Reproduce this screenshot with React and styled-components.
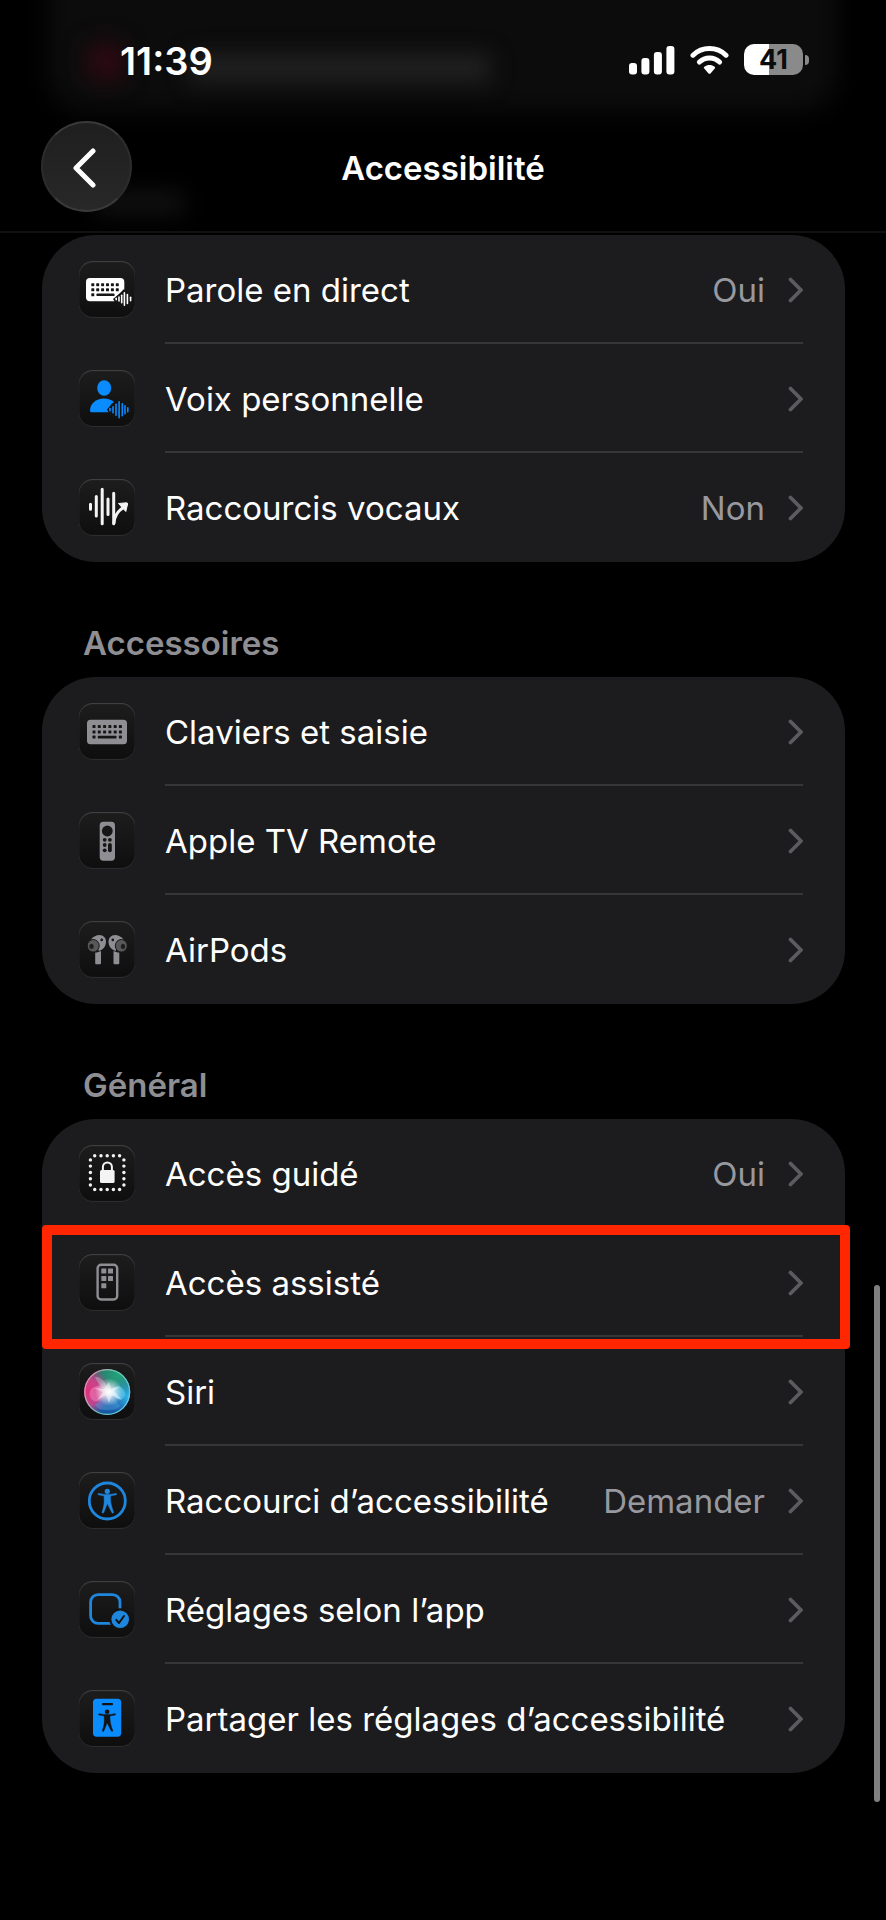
import React from 'react';
import styled, { createGlobalStyle } from 'styled-components';

const GlobalStyle = createGlobalStyle`
  * {
    box-sizing: border-box;
  }

  body {
    margin: 0;
    background: #000;
    color: #fff;
    font-family: Inter, "Liberation Sans", sans-serif;
  }
`;

const Page = styled.div`
  position: relative;
  min-height: 100vh;
  overflow: hidden;
  background: #000;
`;

/* ---------- header ---------- */

const Header = styled.header`
  position: relative;
  padding-bottom: 19px;
  border-bottom: 2px solid #111112;
`;

/* What has scrolled under the header shows through as a faint haze */
const Haze = styled.div`
  position: absolute;
  inset: 0;
  overflow: hidden;
`;

const HazeCard = styled.div`
  position: absolute;
  top: -40px;
  left: 48px;
  right: 48px;
  height: 152px;
  border-radius: 40px;
  background: #0c0c0c;
  filter: blur(12px);
`;

const HazeIcon = styled.div`
  position: absolute;
  top: 44px;
  left: 88px;
  width: 36px;
  height: 36px;
  border-radius: 12px;
  background: #320913;
  filter: blur(12px);
`;

const HazeText = styled.div`
  position: absolute;
  top: ${ props => props.$low ? "192px" : "54px" };
  left: ${ props => props.$low ? "96px" : "190px" };
  width: ${ props => props.$low ? "88px" : "300px" };
  height: ${ props => props.$low ? "22px" : "28px" };
  background: ${ props => props.$low ? "#121212" : "#212121" };
  filter: blur(11px);
`;

const StatusBar = styled.div`
  position: relative;
  display: flex;
  align-items: center;
  justify-content: space-between;
  height: 121px;
  padding: 0 77px 2px 120px;
`;

const Time = styled.time`
  padding-top: 2px;
  font-size: 38px;
  line-height: 44px;
  font-weight: 600;
`;

const StatusIcons = styled.div`
  display: flex;
  align-items: center;
  gap: 15px;
`;

const Battery = styled.div`
  display: flex;
  align-items: center;
  gap: 2px;

  &:after {
    content: "";
    width: 4px;
    height: 10px;
    border-radius: 0 5px 5px 0;
    background: #8a8a8a;
  }
`;

const BatteryLevel = styled.div`
  width: 59px;
  height: 31px;
  border-radius: 10px;
  background: linear-gradient(to right, #fff 42%, #8a8a8a 42%);
  color: #0c0c0c;
  font-size: 27px;
  line-height: 31px;
  font-weight: 700;
  text-align: center;
`;

const NavBar = styled.nav`
  position: relative;
  display: grid;
  grid-template-columns: 91px 1fr 91px;
  align-items: center;
  padding: 0 41px;
`;

const BackButton = styled.button`
  display: flex;
  align-items: center;
  justify-content: center;
  width: 91px;
  height: 91px;
  padding: 0;
  border: 2px solid #3a3a3a;
  border-left-color: #2c2c2c;
  border-right-color: #2c2c2c;
  border-radius: 50%;
  background: linear-gradient(#1f1f1f, #282828);
  color: #fff;
`;

const Title = styled.h1`
  margin: 0;
  padding-top: 2px;
  font-size: 33px;
  line-height: 42px;
  font-weight: 600;
  text-align: center;
`;

/* ---------- settings list ---------- */

const Content = styled.main`
  padding: 2px 41px 148px 42px;
`;

const SectionTitle = styled.h2`
  margin: 0;
  padding: 60px 41px 13px;
  color: #8e8e93;
  font-size: 33px;
  line-height: 42px;
  font-weight: 600;
`;

const Card = styled.ul`
  margin: 0;
  padding: 0;
  list-style: none;
  border-radius: 54px;
  background: #1c1c1e;
`;

const Item = styled.li`
  position: relative;
`;

const RowLink = styled.a`
  display: flex;
  align-items: center;
  gap: 30px;
  padding: 0 42px 0 37px;
  color: inherit;
  text-decoration: none;
`;

const Tile = styled.span`
  flex: none;
  width: 56px;
  height: 57px;
  border-radius: 14px;
  background: linear-gradient(#1d1d1d, #0e0e0e);
  box-shadow: inset 0 1px 1px #454545, inset 0 -1px 1px #303030;

  svg {
    display: block;
  }
`;

const RowBody = styled.span`
  display: flex;
  flex: 1;
  align-items: center;
  min-width: 0;
  height: 109px;
  padding-top: 2px;
  border-bottom: 2px solid transparent;

  ${ Item }:not(:last-child) & {
    border-bottom-color: #363638;
  }
`;

const Label = styled.span`
  flex: 1;
  font-size: 33px;
  line-height: 42px;
`;

const Value = styled.span`
  margin-right: 22px;
  color: #98989f;
  font-size: 33px;
  line-height: 42px;
`;

/* Marker drawn over the row that has to be tapped */
const Highlight = styled.div`
  position: absolute;
  top: -3px;
  left: 0;
  right: -5px;
  bottom: -12px;
  border: 10px solid #ff2600;
  border-radius: 4px;
  pointer-events: none;
  z-index: 1;
`;

const ScrollThumb = styled.div`
  position: absolute;
  top: 66.9%;
  right: 6px;
  bottom: 6.2%;
  width: 6px;
  border-radius: 3px;
  background: #808080;
`;

/* ---------- icons ---------- */

const Glyph = ({ children }) => (
  <svg width="56" height="57" viewBox="-1 0 56 57" fill="none" aria-hidden="true">
    {children}
  </svg>
);

const Bars = ({ bars, cy, color }) => bars.map(([x, h]) => (
  <line key={x} x1={x} x2={x} y1={cy - h / 2} y2={cy + h / 2} stroke={color} strokeWidth="1.6" strokeLinecap="round" />
));

const Dots = ({ xs, ys, r, fill }) => ys.map(y => xs.map(x => (
  <circle key={`${x}-${y}`} cx={x} cy={y} r={r} fill={fill} />
)));

const Keys = ({ xs, ys, fill }) => ys.map(y => xs.map(x => (
  <rect key={`${x}-${y}`} x={x - 1.5} y={y - 1.5} width="3" height="3" rx="0.6" fill={fill} />
)));

const LiveSpeechIcon = () => (
  <Glyph>
    <rect x="6" y="17" width="38.3" height="23.3" rx="4" fill="#fff" />
    <Keys xs={[12.8, 17.7, 22.6, 27.5, 32.4, 37.3]} ys={[23.7, 28.8]} fill="#161616" />
    <Keys xs={[12.8]} ys={[33.8]} fill="#161616" />
    <rect x="16.5" y="32.6" width="18" height="2.4" rx="0.6" fill="#161616" />
    <path d="M33 38l7-6 4-4 8 8v10H38z" fill="#131313" />
    <Bars cy={38} color="#fff" bars={[[36.2, 1.4], [39, 4], [41.7, 7.5], [44.4, 12.5], [47.4, 9], [50.6, 3.4]]} />
  </Glyph>
);

const PersonalVoiceIcon = () => (
  <Glyph>
    <ellipse cx="24.2" cy="18" rx="7" ry="7.7" fill="#0a8cff" />
    <path d="M10 40.4C10 34 16 28.6 24 28.6S38 34 38 40.4c0 1.2-.8 1.9-2 1.9H12c-1.200 0-2-.7-2-1.900z" fill="#0a8cff" />
    <path d="M27 39.5l5-6 6-4.500 4 3v15H31z" fill="#131313" />
    <Bars cy={39.7} color="#0a8cff" bars={[[30, 2.2], [33, 6], [36, 11], [39.1, 16], [42.3, 12], [45, 8], [47.8, 4]]} />
  </Glyph>
);

const VocalShortcutsIcon = () => (
  <Glyph>
    <g stroke="#f4f4f4" strokeWidth="3" strokeLinecap="round">
      <path d="M10.5 25.200v5M16.300 17.500v19.500M22.200 10.300v34.500M28 20v15.500M33.700 14.200v30.600" />
      <path d="M34 44c.5-7 3-11.500 9.500-15.500" />
    </g>
    <path d="M38.500 24.500l8-.7c.8 0 1.200.5 1.100 1.200l-1.800 7.500z" fill="#f4f4f4" stroke="#f4f4f4" strokeLinejoin="round" />
  </Glyph>
);

const KeyboardIcon = () => (
  <Glyph>
    <rect x="7" y="16.7" width="40" height="24.6" rx="3.5" fill="#8e8e93" />
    <Keys xs={[14, 19.3, 24.6, 29.9, 35.2, 40.4]} ys={[23.6, 28.9]} fill="#161616" />
    <Keys xs={[14, 40.4]} ys={[34.1]} fill="#161616" />
    <rect x="17.8" y="32.8" width="18.7" height="2.6" rx="0.6" fill="#161616" />
  </Glyph>
);

const RemoteIcon = () => (
  <Glyph>
    <rect x="19.7" y="9.7" width="15.3" height="39" rx="3.6" fill="#8e8e93" />
    <circle cx="27.3" cy="19" r="5.4" fill="#161616" />
    <Dots xs={[24.7, 29.9]} ys={[27.8]} r={1.9} fill="#161616" />
    <Dots xs={[24.7]} ys={[33, 38.3]} r={1.9} fill="#161616" />
    <path d="M29.900 33v5.300" stroke="#161616" strokeWidth="3.8" strokeLinecap="round" />
  </Glyph>
);

const Earbud = () => (
  <>
    <path d="M11 18.500c2-3 5.500-4.500 8.500-4.500 4 0 6.500 3 6.500 6.500 0 4.500-2.500 8-7 9.500z" fill="#8e8e93" />
    <path d="M15.200 31.500c2 0 4-.6 5.800-1.500v12c0 .8-.5 1.300-1.300 1.300h-3.200c-.8 0-1.300-.5-1.300-1.300z" fill="#8e8e93" />
    <ellipse cx="13.2" cy="24.8" rx="6" ry="6.3" fill="#58585b" stroke="#161616" strokeWidth="1" />
    <ellipse cx="11.5" cy="25.4" rx="2.2" ry="2.6" fill="#1e1e1f" />
    <circle cx="21.7" cy="18.9" r="1.3" fill="#161616" />
  </>
);

const AirPodsIcon = () => (
  <Glyph>
    <Earbud />
    <g transform="matrix(-1 0 0 1 54.5 0)">
      <Earbud />
    </g>
  </Glyph>
);

const GuidedAccessIcon = () => (
  <Glyph>
    <Dots xs={[14.7, 21, 27.2, 33.4, 39.6]} ys={[10.7, 44.5]} r={1.7} fill="#f4f4f4" />
    <Dots xs={[10.4, 43.9]} ys={[14.9, 21.1, 27.5, 33.7, 40]} r={1.7} fill="#f4f4f4" />
    <rect x="20" y="25" width="14.6" height="13" rx="1.5" fill="#f4f4f4" />
    <path d="M22.900 25.500V22a4.500 4.500 0 0 1 9 0v3.500" stroke="#f4f4f4" strokeWidth="2" />
  </Glyph>
);

const AssistiveAccessIcon = () => (
  <Glyph>
    <rect x="17.6" y="10.7" width="19.6" height="34.8" rx="3.5" stroke="#8e8e93" strokeWidth="2.4" />
    <g fill="#8e8e93">
      <rect x="21.3" y="14.6" width="5" height="5" rx="0.5" />
      <rect x="28" y="14.6" width="5" height="5" rx="0.5" />
      <rect x="21.3" y="21.9" width="5" height="5" rx="0.5" />
      <rect x="28" y="21.9" width="5" height="5" rx="0.5" />
      <rect x="21.3" y="29.2" width="5" height="5" rx="0.5" />
    </g>
  </Glyph>
);

const SiriIcon = () => (
  <Glyph>
    <defs>
      <radialGradient id="siriPink" cx="0.06" cy="0.5" r="0.52">
        <stop offset="0" stopColor="#e0307c" />
        <stop offset="0.55" stopColor="#d8408c" stopOpacity="0.85" />
        <stop offset="1" stopColor="#c0408c" stopOpacity="0" />
      </radialGradient>
      <radialGradient id="siriGreen" cx="0.75" cy="0.12" r="0.55">
        <stop offset="0" stopColor="#1fa678" />
        <stop offset="0.6" stopColor="#1f8f74" stopOpacity="0.8" />
        <stop offset="1" stopColor="#1f8f74" stopOpacity="0" />
      </radialGradient>
      <radialGradient id="siriCyan" cx="0.95" cy="0.6" r="0.45">
        <stop offset="0" stopColor="#2bb6e6" />
        <stop offset="1" stopColor="#2b8fd0" stopOpacity="0" />
      </radialGradient>
      <radialGradient id="siriGlow" cx="0.54" cy="0.5" r="0.3">
        <stop offset="0" stopColor="#fff" />
        <stop offset="0.25" stopColor="#fff" stopOpacity="0.8" />
        <stop offset="1" stopColor="#fff" stopOpacity="0" />
      </radialGradient>
      <linearGradient id="siriBase" x1="0.2" y1="0" x2="0.4" y2="1">
        <stop offset="0" stopColor="#4f5a5e" />
        <stop offset="0.4" stopColor="#66668a" />
        <stop offset="0.7" stopColor="#2f63a8" />
        <stop offset="1" stopColor="#1257a0" />
      </linearGradient>
      <linearGradient id="siriRim" x1="0" y1="0.3" x2="1" y2="0.7">
        <stop offset="0" stopColor="#f08fb0" />
        <stop offset="0.5" stopColor="#6fc7b0" />
        <stop offset="1" stopColor="#6cc8ee" />
      </linearGradient>
    </defs>
    <circle cx="27.2" cy="29" r="23" fill="url(#siriBase)" />
    <circle cx="27.2" cy="29" r="23" fill="url(#siriGreen)" />
    <circle cx="27.2" cy="29" r="23" fill="url(#siriPink)" />
    <circle cx="27.2" cy="29" r="23" fill="url(#siriCyan)" />
    <path d="M29 29c-4-5-10-7.500-15-5-6 3-6 11 0 14 5 2 11-3 15-9z" fill="#f79cc8" opacity="0.4" />
    <path d="M29 29c3-5 9-7 13-4s4 9 0 11-9-2-13-7z" fill="#6fd8ff" opacity="0.5" />
    <path d="M29 29l11 14c-3 4-9 5-14 4-5 0-9-2-11-5z" fill="#5aaef0" opacity="0.35" />
    <path d="M15 14c5-1 11 4 14 15-6-2-11-8-14-15z" fill="#e8f0f0" opacity="0.3" />
    <path d="M29 19l2 7 9-3-6 5 8 9-10-5-3 8-3-8-9 5 6-8-9-4 10 1z" fill="#fff" opacity="0.45" />
    <circle cx="27.2" cy="29" r="23" fill="url(#siriGlow)" />
    <circle cx="27.2" cy="29" r="22.4" stroke="url(#siriRim)" strokeWidth="1.2" />
  </Glyph>
);

// Figure with arms out, drawn round its own centre
const Figure = ({ color }) => (
  <g fill={color}>
    <circle cx="0" cy="-9.7" r="2.6" />
    <path
      d="M-9.500-6.900c0-.6.500-.8 1-.7 3 .7 6 1 8.500 1s5.500-.3 8.500-1c.5-.1 1 .1 1 .7 0 .4-.2.600-.7.700-2 .5-3.600.8-4.900 1-.6.1-.7.400-.7.900 0 5 .3 7.500 3 15.200.2.600 0 1-.4 1.200-.5.2-1-.1-1.300-.6L0 2.500l-3.500 9c-.3.500-.8.8-1.300.6-.4-.2-.6-.6-.4-1.200C-2.500 3.200-3.200.7-3.200-4.300c0-.5-.1-.8-.7-.9-1.300-.2-2.900-.5-4.900-1-.5-.1-.7-.3-.7-.7z"
      stroke={color}
      strokeWidth="0.5"
    />
  </g>
);

const AccessibilityIcon = () => (
  <Glyph>
    <circle cx="27.3" cy="29" r="18" stroke="#1f86dd" strokeWidth="2.8" />
    <g transform="translate(27.3 29)">
      <Figure color="#1f86dd" />
    </g>
  </Glyph>
);

const PerAppIcon = () => (
  <Glyph>
    <rect x="10.6" y="13.6" width="29.4" height="28.8" rx="7.5" stroke="#1f86dd" strokeWidth="2.8" />
    <circle cx="40.2" cy="38.3" r="11" fill="#131313" />
    <circle cx="40.2" cy="38.3" r="8.8" fill="#1f86dd" />
    <path d="M36.300 38.800l2.700 3.200 5-7" stroke="#131313" strokeWidth="2" strokeLinecap="round" strokeLinejoin="round" />
  </Glyph>
);

const ShareIcon = () => (
  <Glyph>
    <rect x="13" y="8.7" width="28.2" height="38" rx="3.6" fill="#0a8cff" />
    <path d="M23 14.200h9" stroke="#131313" strokeWidth="2.2" strokeLinecap="round" />
    <g transform="translate(27.1 30.5) scale(0.9)">
      <Figure color="#131313" />
    </g>
  </Glyph>
);

const Chevron = () => (
  <svg width="16" height="28" viewBox="0 0 16 28" fill="none" aria-hidden="true">
    <path d="M3.500 3.500L14 14 3.500 24.500" stroke="#5c5c60" strokeWidth="3.8" strokeLinecap="round" strokeLinejoin="round" />
  </svg>
);

const BackChevron = () => (
  <svg width="28" height="42" viewBox="0 0 28 42" fill="none" aria-hidden="true">
    <path d="M20 5L3 22 20 39" stroke="currentColor" strokeWidth="5" strokeLinecap="round" strokeLinejoin="round" />
  </svg>
);

const SignalIcon = () => (
  <svg width="46" height="30" viewBox="0 0 46 30" fill="#fff" aria-hidden="true">
    <rect x="0" y="18" width="8" height="11.5" rx="3" />
    <rect x="12.4" y="13" width="8" height="16.5" rx="3" />
    <rect x="24.9" y="7" width="8" height="22.5" rx="3" />
    <rect x="37.4" y="1" width="8" height="28.5" rx="3" />
  </svg>
);

const WifiIcon = () => (
  <svg width="39" height="30" viewBox="0 0 39 30" fill="none" aria-hidden="true">
    <path d="M3 10.200C7.500 5.800 13.300 3.500 19.500 3.500S31.500 5.800 36 10.200" stroke="#fff" strokeWidth="5" strokeLinecap="round" />
    <path d="M9.400 17c2.800-2.700 6.300-4.100 10.100-4.100s7.300 1.400 10.100 4.100" stroke="#fff" strokeWidth="5" strokeLinecap="round" />
    <path d="M14.300 23.600c-.6-.6-.6-1.400.1-1.900 1.500-1.200 3.200-1.800 5.100-1.800s3.600.6 5.100 1.800c.7.500.7 1.300.1 1.900l-4.200 4.800c-.6.600-1.400.6-2 0z" fill="#fff" />
  </svg>
);

/* ---------- page ---------- */

const sections = [
  {
    id: 'parole',
    rows: [
      { label: 'Parole en direct', value: 'Oui', icon: LiveSpeechIcon },
      { label: 'Voix personnelle', icon: PersonalVoiceIcon },
      { label: 'Raccourcis vocaux', value: 'Non', icon: VocalShortcutsIcon },
    ],
  },
  {
    id: 'accessoires',
    title: 'Accessoires',
    rows: [
      { label: 'Claviers et saisie', icon: KeyboardIcon },
      { label: 'Apple TV Remote', icon: RemoteIcon },
      { label: 'AirPods', icon: AirPodsIcon },
    ],
  },
  {
    id: 'general',
    title: 'Général',
    rows: [
      { label: 'Accès guidé', value: 'Oui', icon: GuidedAccessIcon },
      { label: 'Accès assisté', icon: AssistiveAccessIcon, highlight: true },
      { label: 'Siri', icon: SiriIcon },
      { label: 'Raccourci d’accessibilité', value: 'Demander', icon: AccessibilityIcon },
      { label: 'Réglages selon l’app', icon: PerAppIcon },
      { label: 'Partager les réglages d’accessibilité', icon: ShareIcon },
    ],
  },
];

const Row = ({ label, value, icon: Icon, highlight }) => (
  <Item>
    <RowLink href="#">
      <Tile><Icon /></Tile>
      <RowBody>
        <Label>{label}</Label>
        {value && <Value>{value}</Value>}
        <Chevron />
      </RowBody>
    </RowLink>
    {highlight && <Highlight />}
  </Item>
);

export default function App() {
  return (
    <Page>
      <GlobalStyle />
      <Header>
        <Haze>
          <HazeCard />
          <HazeIcon />
          <HazeText />
          <HazeText $low />
        </Haze>
        <StatusBar>
          <Time>11:39</Time>
          <StatusIcons>
            <SignalIcon />
            <WifiIcon />
            <Battery>
              <BatteryLevel>41</BatteryLevel>
            </Battery>
          </StatusIcons>
        </StatusBar>
        <NavBar>
          <BackButton type="button" aria-label="Retour">
            <BackChevron />
          </BackButton>
          <Title>Accessibilité</Title>
        </NavBar>
      </Header>
      <Content>
        {sections.map(section => (
          <section key={section.id}>
            {section.title && <SectionTitle>{section.title}</SectionTitle>}
            <Card>
              {section.rows.map(row => <Row key={row.label} {...row} />)}
            </Card>
          </section>
        ))}
      </Content>
      <ScrollThumb />
    </Page>
  );
}
